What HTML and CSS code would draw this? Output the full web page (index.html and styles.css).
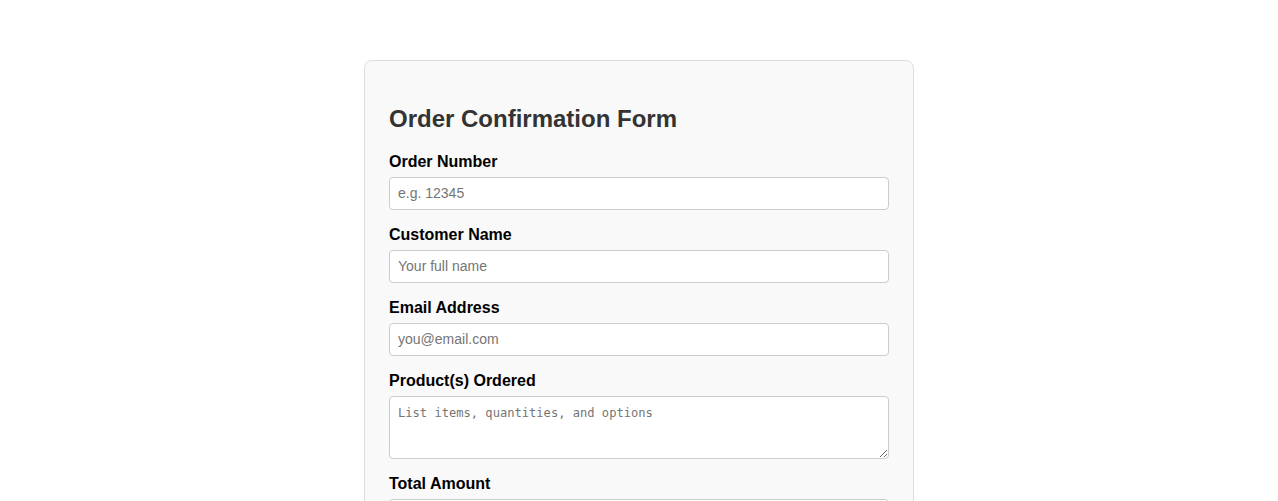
FILE: index.html
```html
<!DOCTYPE html>
<html lang="en">
<head>
<meta charset="utf-8">
<title>Order Confirmation Form</title>
<link rel="stylesheet" href="styles.css">
</head>
<body>
  <main class="order-card">
    <h2 class="order-title">Order Confirmation Form</h2>
    <form class="order-form">
      <label class="field-label" for="order-number">Order Number</label>
      <input class="field-input" id="order-number" type="text" placeholder="e.g. 12345">

      <label class="field-label" for="customer-name">Customer Name</label>
      <input class="field-input" id="customer-name" type="text" placeholder="Your full name">

      <label class="field-label" for="email">Email Address</label>
      <input class="field-input" id="email" type="email" placeholder="you@email.com">

      <label class="field-label" for="products">Product(s) Ordered</label>
      <textarea class="field-input field-area" id="products" placeholder="List items, quantities, and options"></textarea>

      <label class="field-label" for="total">Total Amount</label>
      <input class="field-input" id="total" type="text" placeholder="$0.00">

      <button class="submit-btn" type="submit">Confirm Order</button>
    </form>
  </main>
</body>
</html>
```
FILE: styles.css
```css
html::-webkit-scrollbar {
  display: none;
}

body {
  margin: 0;
  padding: 60px 0 40px;
  background: #ffffff;
  font-family: "Liberation Sans", Arial, sans-serif;
  color: #000;
}

.order-card {
  width: 500px;
  margin: 0 auto;
  padding: 24px;
  background: #f9f9f9;
  border: 1px solid #dddddd;
  border-radius: 8px;
}

.order-title {
  margin: 20px 0 19px;
  font-size: 24px;
  line-height: 28px;
  font-weight: bold;
  color: #333333;
}

.order-form {
  display: flex;
  flex-direction: column;
}

.field-label {
  display: block;
  margin-bottom: 5px;
  font-size: 16px;
  font-weight: bold;
  line-height: 20px;
}

.field-input {
  display: block;
  box-sizing: border-box;
  width: 100%;
  height: 33px;
  margin: 0 0 15px;
  padding: 0 8px 2px;
  background: #ffffff;
  border: 1px solid #cccccc;
  border-radius: 4px;
  font-family: "Liberation Sans", Arial, sans-serif;
  font-size: 14px;
  color: #000;
}

.field-input::placeholder {
  color: #757575;
}

.field-area {
  height: 63px;
  padding: 9px 8px 8px;
  resize: vertical;
  font-family: "DejaVu Sans Mono", "Liberation Mono", monospace;
  font-size: 12.1px;
  line-height: 15px;
}

.submit-btn {
  align-self: flex-start;
  padding: 10px 18px;
  background: #333333;
  color: #ffffff;
  border: none;
  border-radius: 4px;
  font-family: "Liberation Sans", Arial, sans-serif;
  font-size: 15px;
  font-weight: bold;
}
```
